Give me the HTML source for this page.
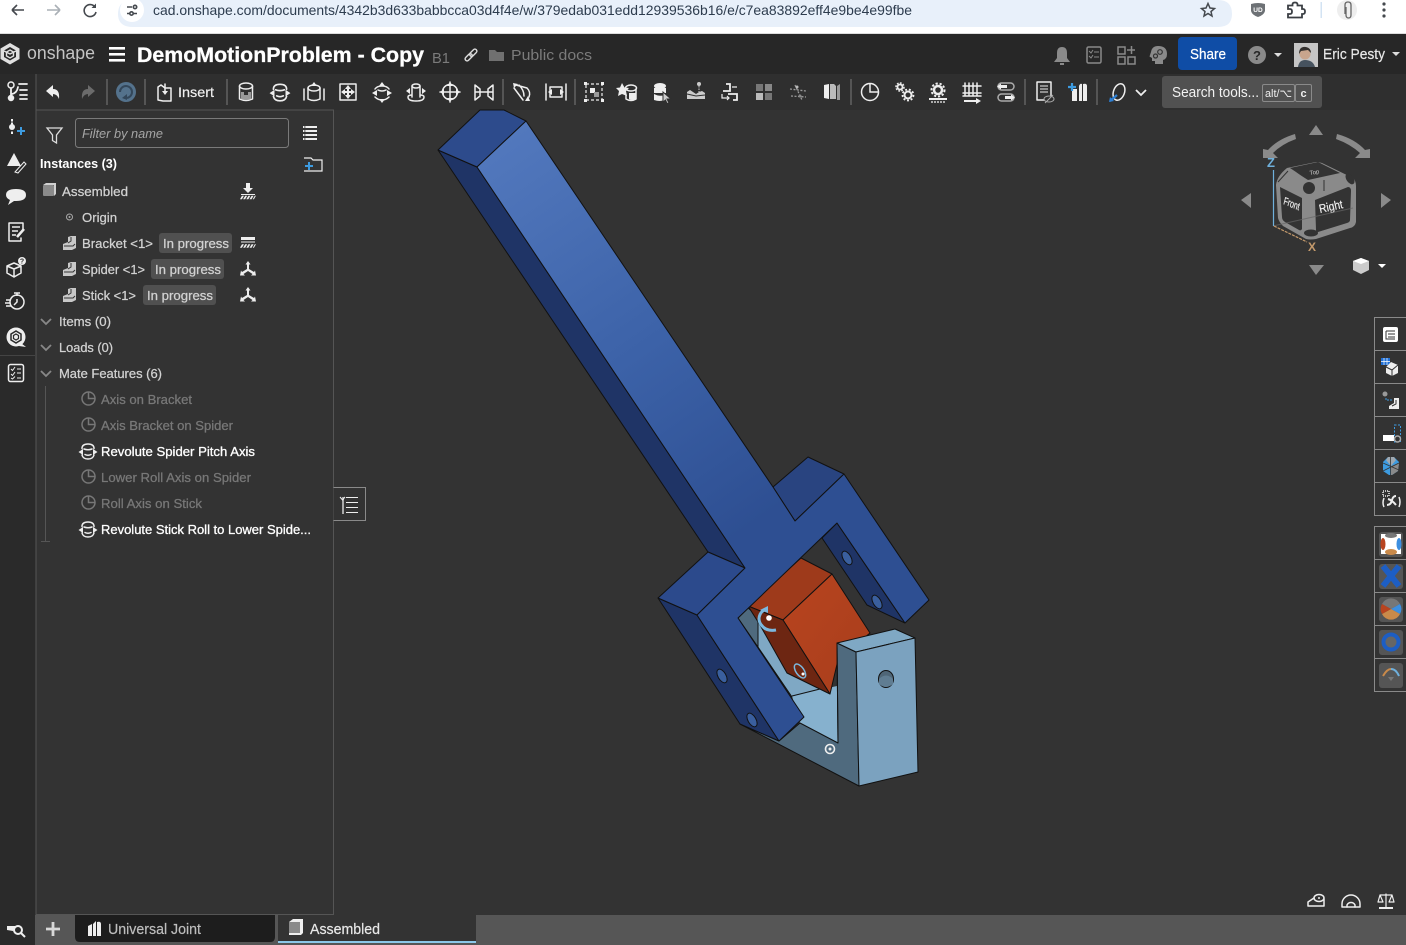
<!DOCTYPE html>
<html lang="en"><head><meta charset="utf-8"><title>DemoMotionProblem - Copy</title>
<style>
html,body{margin:0;padding:0;background:#333;width:1406px;height:945px;overflow:hidden}
svg{display:block;font-family:"Liberation Sans",sans-serif}
.i{fill:none;stroke:#eee;stroke-width:1.5;stroke-linecap:round;stroke-linejoin:round}
.f{fill:#eee;stroke:none}
.g{fill:#999;stroke:none}
.t{fill:#d2d2d2;font-size:13px;stroke:#d2d2d2;stroke-width:.25}
.w{fill:#fff;font-size:13px;font-weight:bold}
.m{fill:#787878;font-size:13px;stroke:#787878;stroke-width:.25}
.k{stroke:#111;stroke-width:1;stroke-linejoin:round}
.sep{stroke:#555;stroke-width:2}
</style></head><body>
<svg width="1406" height="945" viewBox="0 0 1406 945" xmlns="http://www.w3.org/2000/svg">
<defs>
<linearGradient id="st" gradientUnits="userSpaceOnUse" x1="500" y1="140" x2="760" y2="520"><stop offset="0" stop-color="#5278bd"/><stop offset=".55" stop-color="#3c62a8"/><stop offset="1" stop-color="#2e4f92"/></linearGradient>
<linearGradient id="or" x1="0" y1="0" x2="1" y2="1"><stop offset="0" stop-color="#b8441f"/><stop offset="1" stop-color="#a83e1c"/></linearGradient>
<g id="part"><path class="f" style="fill:#c8c8c8" d="M-7 1 L-2 -1 V-6 L1 -7 H6 V5 L2 7 H-7Z"/><path d="M-2 0 L1 -2 V-6" fill="none" stroke="#333" stroke-width="1"/><path d="M-6 3 H3 L5 1" fill="none" stroke="#333" stroke-width="1"/></g>
<g id="pie"><circle r="6.500" fill="none" stroke="#777" stroke-width="1.500"/><path d="M0 -6.500 V0 H6.500" fill="none" stroke="#777" stroke-width="1.500"/></g>
<g id="rev"><path class="i" d="M-6 -2.500 Q-6 -7 0 -7 Q6 -7 6 -2.500 M-4 -2 Q0 -.5 4 -2 M-6 4 Q-5 8 0 8 Q5 8 6 4 M-3 3.500 Q0 5 3 3.500"/><path class="f" d="M-9.500 1 L-5 -2 V4Z M9.500 1 L5 -2 V4Z"/></g>
<g id="tri"><path class="f" d="M0 -7 L2.500 -3.500 H1 V1 L6 4 L7 2.500 L8 7.500 L3 7.500 L4.500 6 L0 3 L-4.500 6 L-3 7.500 L-8 7.500 L-7 2.500 L-6 4 L-1 1 V-3.500 H-2.500Z"/></g>
</defs>

<!-- backgrounds -->
<rect width="1406" height="945" fill="#333"/>
<rect width="1406" height="34" fill="#fff"/>
<rect y="33" width="1406" height="1" fill="#ddd"/>
<rect y="34" width="1406" height="40" fill="#272727"/>
<rect x="36" y="74" width="1370" height="36" fill="#2f2f2f"/>
<rect x="0" y="74" width="36" height="841" fill="#2a2a2a"/>
<rect x="36" y="110" width="297.500" height="804.500" fill="#333" stroke="#555"/>
<rect x="35.500" y="74" width="1" height="841" fill="#555"/>
<rect y="915" width="1406" height="30" fill="#565656"/>
<rect y="915" width="35" height="30" fill="#2a2a2a"/>

<!-- browser bar -->
<path d="M133 0 H1218 Q1232 0 1232 14 Q1232 27 1218 27 H133 Q118 27 118 14 Q118 0 133 0Z" fill="#e8f0fa"/>
<circle cx="132" cy="10" r="12" fill="#fff"/>
<g fill="none" stroke="#45494e" stroke-width="1.600">
<path d="M12 10 H24 M12 10 L17 5 M12 10 L17 15"/>
<path d="M47 10 H60 M60 10 L55 5 M60 10 L55 15" stroke="#aab0b6"/>
<path d="M95 7 A6 6 0 1 0 96 12"/><path d="M96 3.500 V8 H91.500" fill="#45494e" stroke="none"/>
<path d="M127 7 H132 M127 13.500 H130 M137 13.500 H133"/><circle cx="135" cy="7" r="1.700"/><circle cx="131.500" cy="13.500" r="1.700"/>
</g>
<text x="153" y="15" font-size="14" fill="#2d3c4e" textLength="759" lengthAdjust="spacingAndGlyphs">cad.onshape.com/documents/4342b3d633babbcca03d4f4e/w/379edab031edd12939536b16/e/c7ea83892eff4e9be4e99fbe</text>
<path d="M1208 3.500 L1210 8 L1214.500 8.500 L1211 11.500 L1212 16 L1208 13.500 L1204 16 L1205 11.500 L1201.500 8.500 L1206 8Z" fill="none" stroke="#45494e" stroke-width="1.500"/>
<path d="M1251 4 Q1258 2 1265 4 V11 Q1264 15 1258 17 Q1252 15 1251 11Z" fill="#6d7175"/>
<text x="1258" y="12" font-size="6.500" fill="#fff" text-anchor="middle" font-weight="bold">UD</text>
<path d="M1288 5.500 H1292.500 V4.500 Q1292.500 2.500 1295 2.500 Q1297.500 2.500 1297.500 4.500 V5.500 H1302 V9 H1303 Q1305 9 1305 11.500 Q1305 14 1303 14 H1302 V17.500 H1288 V14 H1290 Q1292 14 1292 11.500 Q1292 9 1290 9 H1288Z" fill="none" stroke="#3b3f44" stroke-width="1.800"/>
<rect x="1320.500" y="2" width="1.500" height="16" fill="#d3e3f3"/>
<circle cx="1347" cy="10" r="10" fill="#eee"/>
<path d="M1345 14 V5 Q1345 2 1348 2 Q1351 2 1351 5 V15 Q1351 18 1348.500 18 Q1346 18 1346 15 V7" fill="none" stroke="#666" stroke-width="1.300"/>
<circle cx="1384" cy="4" r="1.600" fill="#45494e"/><circle cx="1384" cy="10" r="1.600" fill="#45494e"/><circle cx="1384" cy="16" r="1.600" fill="#45494e"/>

<!-- header -->
<path d="M10 43 L19.500 48.500 V59 L10 64.500 L.5 59 V48.500Z" fill="#e0e0e0"/>
<path d="M10 47 L16 50.500 V57 L10 60.500 L4 57 V50.500Z" fill="#272727"/>
<path d="M10 50 L13.500 52 V56 L10 58 L6.500 56 V52Z M4 51 L10 54 L16 51" fill="none" stroke="#e0e0e0" stroke-width="1.400"/>
<text x="27" y="59" font-size="18" fill="#c4c4c4" textLength="68" lengthAdjust="spacingAndGlyphs">onshape</text>
<rect x="109" y="47" width="16" height="2.600" fill="#fff"/><rect x="109" y="53" width="16" height="2.600" fill="#fff"/><rect x="109" y="59" width="16" height="2.600" fill="#fff"/>
<text x="137" y="62" font-size="21" font-weight="bold" fill="#fff" stroke="#fff" stroke-width=".3" textLength="287" lengthAdjust="spacingAndGlyphs">DemoMotionProblem - Copy</text>
<text x="432" y="63" font-size="15" fill="#7b7b7b" textLength="18" lengthAdjust="spacingAndGlyphs">B1</text>
<g transform="rotate(-45 471 55)" fill="none" stroke="#ddd" stroke-width="1.400"><rect x="463.500" y="53" width="8.500" height="4" rx="2"/><rect x="470" y="53" width="8.500" height="4" rx="2"/></g>
<path d="M489 50 H495 L497 52 H504 V61 H489Z" fill="#707070"/>
<text x="511" y="60" font-size="15" fill="#7b7b7b" textLength="81" lengthAdjust="spacingAndGlyphs">Public docs</text>
<path d="M1062 47 Q1067 47 1067 53 V58 L1070 62 H1054 L1057 58 V53 Q1057 47 1062 47Z M1060 63 H1064 V65 H1060Z" fill="#8a8a8a"/>
<rect x="1087" y="47" width="14" height="16" rx="1.500" fill="none" stroke="#8a8a8a" stroke-width="1.500"/>
<path d="M1089 51 L1091 53 L1093 50 M1094 52 H1099 M1089 56 L1091 58 L1093 55 M1094 57 H1099" fill="none" stroke="#8a8a8a"/>
<g fill="none" stroke="#8a8a8a" stroke-width="1.500"><rect x="1118" y="47" width="7" height="7"/><rect x="1118" y="57" width="7" height="7"/><rect x="1128" y="57" width="7" height="7"/><path d="M1131.500 46 V54 M1127 50 H1135"/></g>
<path d="M1158 46 Q1167 46 1167 54 Q1167 59 1163 60 V64 H1155 V61 H1152 V58 L1149.500 56.500 L1151 52 Q1152 46 1158 46Z" fill="#8a8a8a"/>
<circle cx="1160" cy="52" r="2.300" fill="none" stroke="#333" stroke-width="1.200"/><circle cx="1155.500" cy="56" r="2" fill="none" stroke="#333" stroke-width="1.200"/>
<rect x="1178" y="37" width="59" height="33" rx="4" fill="#0f4da6"/>
<text x="1190" y="59" font-size="14.500" fill="#fff" stroke="#fff" stroke-width=".2" textLength="36" lengthAdjust="spacingAndGlyphs">Share</text>
<circle cx="1257" cy="55" r="9" fill="#8a8a8a"/><text x="1257" y="60" font-size="13" font-weight="bold" text-anchor="middle" fill="#272727">?</text>
<path d="M1274 53 H1282 L1278 57Z M1392 52 H1400 L1396 56Z" fill="#ddd"/>
<rect x="1294" y="43" width="24" height="24" fill="#c5c5c5"/>
<path d="M1298 67 Q1299 60 1305 60 Q1313 60 1315 67Z" fill="#46525e"/><circle cx="1305" cy="54" r="5.500" fill="#c8a58d"/><path d="M1299 54 Q1299 46 1306 47 Q1311 48 1311 53 L1308 50 L1301 51Z" fill="#33302e"/>
<text x="1323" y="59" font-size="15" fill="#e8e8e8" stroke="#e8e8e8" stroke-width=".2" textLength="62" lengthAdjust="spacingAndGlyphs">Eric Pesty</text>

<!-- toolbar -->
<g class="sep"><path d="M107 79 V105 M145 79 V105 M227 79 V105 M503 79 V105 M575 79 V105 M851 79 V105 M1025 79 V105 M1097 79 V105"/></g>
<path class="f" d="M46 91 L53 85 V89 Q60 89 59 99 Q57 94 53 94 V97Z"/>
<path d="M95 91 L88 85 V89 Q81 89 82 99 Q84 94 88 94 V97Z" fill="#6b6b6b"/>
<circle cx="126" cy="92" r="10" fill="#54728c"/><path d="M120 92 A6 6 0 1 1 126 98" fill="none" stroke="#33475a" stroke-width="2"/><path d="M122 98 L127 94 V100Z" fill="#33475a"/>
<g class="i"><path d="M158 87 V100 L163 101 H171 V88 H165 L161 85Z"/><path d="M165 84 V92"/></g><path class="f" d="M162 91 H168 L165 95Z"/>
<text x="178" y="97" font-size="14" fill="#f0f0f0" stroke="#f0f0f0" stroke-width=".2" textLength="36" lengthAdjust="spacingAndGlyphs">Insert</text>

<g transform="translate(246,92)"><ellipse cy="-6" rx="6.500" ry="3" class="i"/><path class="i" d="M-6.500 -6 V7 Q0 10 6.500 7 V-6"/><path class="g" d="M-5 0 H-2 V3 H2 V0 H5 V7 Q0 9 -5 7Z"/></g>
<use href="#rev" transform="translate(280,92) scale(1.100)"/>
<g transform="translate(314,92)"><ellipse cy="-4" rx="6" ry="3" class="i"/><path class="i" d="M-6 -4 V7 Q0 10 6 7 V-4 M-10 -3 V8 M10 -3 V8"/><path class="f" d="M0 -10 L3 -6 H-3Z"/></g>
<g transform="translate(348,92)"><rect x="-8" y="-8" width="16" height="16" class="i"/><path class="f" d="M0 -7 L3 -3 H1 V-1 H3 V-3 L7 0 L3 3 V1 H1 V3 H3 L0 7 L-3 3 H-1 V1 H-3 V3 L-7 0 L-3 -3 V-1 H-1 V-3 H-3Z"/></g>
<g transform="translate(382,92)"><path class="i" d="M-7 -3 Q-5 -6 0 -6 Q5 -6 7 -3 M-4 -2 Q0 0 4 -2 M-7 5 Q-4 8 0 8 Q4 8 7 5"/><path class="f" d="M0 -10 L3 -6 H-3Z M-10 1 L-5 -2 V4Z M10 1 L5 -2 V4Z M-3 7 H3 L0 11Z"/></g>
<g transform="translate(416,92)"><ellipse cy="-6" rx="4" ry="2" class="i"/><path class="i" d="M-4 -6 V5 M4 -6 V5 M-8 5 Q-8 9 0 9 Q8 9 8 5 Q8 3 4 3 M-4 3 Q-8 3 -8 5"/><path class="f" d="M-10 -1 L-6 -4 V2Z M10 -1 L6 -4 V2Z"/></g>
<g transform="translate(450,92)"><circle r="7.500" class="i"/><path class="i" d="M-10 0 H10 M0 -10 V10"/><path class="f" d="M0 -10 L3 -6 H-3Z M0 10 L3 6 H-3Z M-10 0 L-6 -3 V3Z M10 0 L6 -3 V3Z"/></g>
<g transform="translate(484,92)"><path class="i" d="M-9 -7 V8 L-4 4 V-3Z M9 -7 V8 L4 4 V-3Z M-8 0 H8"/></g>
<g transform="translate(522,92)"><path class="i" d="M-6 -7 L5 -4 Q9 0 7 5 M-8 -4 L1 8 M-3 -7 Q2 -2 2 4"/><path class="f" d="M-9 -9 L-4 -8 L-8 -4Z M3 9 L8 9 L6 4Z"/></g>
<g transform="translate(556,92)"><path class="i" d="M-10 -8 V8 M10 -8 V8 M-6 -5 H6 V5 H-6Z"/><path class="f" d="M-8 0 L-4 -3 V3Z M8 0 L4 -3 V3Z"/></g>
<g transform="translate(594,92)"><rect x="-8" y="-8" width="16" height="16" fill="none" stroke="#eee" stroke-width="1.200" stroke-dasharray="3 2"/><rect x="-4" y="-4" width="5" height="5" class="f"/><rect x="0" y="0" width="5" height="5" class="g"/><rect x="-10" y="-10" width="3" height="3" class="f"/><rect x="7" y="-10" width="3" height="3" class="f"/><rect x="-10" y="7" width="3" height="3" class="f"/><rect x="7" y="7" width="3" height="3" class="f"/></g>
<g transform="translate(628,92)"><path class="f" d="M-6 -9 L-3.500 -4.500 L1 -4 L-2 -1 L-1 4 L-6 2 L-10 4 L-9 -1 L-12 -4 L-8 -4.500Z"/><ellipse cx="3" cy="-4" rx="5.500" ry="3" class="i"/><path class="i" d="M8 -3 V7 Q3 10 -2 7 V3"/><path class="f" d="M1 1 H8 V7 Q3 9 1 7Z"/></g>
<g transform="translate(662,92)"><ellipse cx="-2" cy="-6" rx="6" ry="3" class="f"/><path class="f" d="M-8 -4 H4 V1 H-8Z"/><path class="f" d="M-8 2 Q-2 5 2 3 V8 Q-2 10 -8 8Z"/><path d="M1 0 L9 7 L5 7 L7 11 L5 11.500 L3.500 8 L1 10Z" fill="#ccc" stroke="#2f2f2f"/></g>
<g transform="translate(696,92)"><circle cx="3" cy="-8" r="2" fill="#ccc"/><path d="M3 -6 V0" stroke="#ccc" stroke-dasharray="1.500 1"/><path d="M-9 0 L-6 -2 L-3 0 L0 2 L3 0 L6 -1 L9 1 V7 H-9Z" fill="#ccc"/><path d="M-9 2 L0 4 L9 3" stroke="#2f2f2f" fill="none"/></g>
<g transform="translate(730,92)"><path d="M-4 -8 H0 V-1 H-7" fill="none" stroke="#eee" stroke-width="1.800"/><path d="M4 9 H8 V3 H-1" fill="none" stroke="#eee" stroke-width="1.800" transform="translate(-1,-1)"/><path d="M-8 2 V6 H-1 M-3 4 L-1 6 L-3 8 M7 -5 H2" fill="none" stroke="#eee" stroke-width="1.200"/></g>
<g transform="translate(764,92)"><rect x="-8" y="-8" width="7" height="7" class="g" style="fill:#777"/><rect x="1" y="-8" width="7" height="7" class="g" style="fill:#888"/><rect x="-8" y="1" width="7" height="7" class="g" style="fill:#bbb"/><rect x="1" y="1" width="7" height="7" class="g" style="fill:#777"/></g>
<g transform="translate(798,92)" stroke="#9a9a9a" stroke-dasharray="2 1.500" fill="none" stroke-width="1.300"><path d="M-8 -3 L8 -1 M-7 4 L8 5 M-3 -7 L4 8"/><circle cx="-1" cy="-5" r="1.500" fill="#bbb" stroke="none"/><circle cx="2" cy="4" r="1.500" fill="#888" stroke="none"/></g>
<g transform="translate(832,92)"><path class="f" d="M-8 -7 L-3 -8 V7 L-8 6Z"/><path d="M-2 -8 H2 L4 -6 V7 H-2Z" fill="#bbb"/><path class="g" d="M5 -6 L8 -8 V8 H5Z"/></g>
<circle cx="870" cy="92" r="8.500" fill="none" stroke="#eee" stroke-width="1.500"/><path d="M870 83.500 V92 H878.500" fill="none" stroke="#eee" stroke-width="1.500"/>
<g transform="translate(904,92)"><circle cx="-4" cy="-5" r="2.500" fill="none" stroke="#eee" stroke-width="1.800"/><circle cx="-4" cy="-5" r="4" fill="none" stroke="#eee" stroke-width="1.500" stroke-dasharray="1.800 1.300"/><circle cx="4" cy="3" r="3.500" fill="none" stroke="#eee" stroke-width="2"/><circle cx="4" cy="3" r="5.500" fill="none" stroke="#eee" stroke-width="1.800" stroke-dasharray="2 1.800"/></g>
<g transform="translate(938,92)"><circle cy="-2" r="4" fill="none" stroke="#eee" stroke-width="2.500"/><circle cy="-2" r="6.500" fill="none" stroke="#eee" stroke-width="2" stroke-dasharray="2.200 1.800"/><path class="f" d="M-9 6 H9 V8 H-9Z"/><path d="M-7 10 H7" stroke="#aaa" stroke-dasharray="2 1" stroke-width="2"/></g>
<g transform="translate(972,92)"><path class="i" d="M-9 -6 H9 M-9 1 H9 M-7 -9 V4 M-3 -9 V4 M1 -9 V4 M5 -9 V4 M-9 4 L9 4"/><path class="f" d="M-8 8 H4 V6 L9 9 L4 12 V10 H-8Z"/></g>
<g transform="translate(1006,92)"><rect x="-8" y="-9" width="16" height="7" rx="3.500" class="i" style="stroke:#aaa"/><rect x="-8" y="2" width="16" height="7" rx="3.500" class="i" style="stroke:#aaa"/><path class="f" d="M-9 -5.500 L-5 -8.500 V-7 H1 V-4 H-5 V-2.500Z M9 5.500 L5 2.500 V4 H-1 V7 H5 V8.500Z"/></g>
<g transform="translate(1044,92)"><path class="i" d="M-7 -10 H7 V4 M-7 -10 V8 H0"/><path d="M-4 -6 H4 M-4 -3 H4 M-4 0 H4" stroke="#eee"/><ellipse cx="5" cy="7" rx="5" ry="3" fill="none" stroke="#aaa"/><path d="M1 11 L9 3" stroke="#aaa"/></g>
<g transform="translate(1078,92)"><path class="f" d="M-6 -3 H-1 V9 H-6Z"/><path class="f" d="M1 -6 Q2 -9 4 -8 L4 9 H1Z M5 -8 Q9 -9 9 -6 V9 H5Z"/><path d="M-10 -5 H-2 M-6 -9 V-1" stroke="#3d9be0" stroke-width="2.200"/></g>
<g transform="translate(1117,92)"><ellipse cx="2" rx="5.500" ry="8.500" transform="rotate(20 2 0)" class="i"/><path d="M0 3 L-7 9" stroke="#2d7fd3" stroke-width="2.200"/><path d="M-8 10 L-7 5 L-3 9Z" fill="#2d7fd3"/></g>
<path d="M1136 90 L1141 95 L1146 90" fill="none" stroke="#eee" stroke-width="1.800"/>
<rect x="1162" y="76" width="160" height="32" rx="3" fill="#515151"/>
<text x="1172" y="97" font-size="14.500" fill="#f2f2f2" textLength="87" lengthAdjust="spacingAndGlyphs">Search tools...</text>
<rect x="1262.500" y="84.500" width="32" height="17" rx="1.500" fill="none" stroke="#8a8a8a"/><rect x="1295.500" y="84.500" width="16" height="17" rx="1.500" fill="none" stroke="#8a8a8a"/>
<text x="1265" y="97" font-size="11" fill="#eee" textLength="27" lengthAdjust="spacingAndGlyphs">alt/⌥</text>
<text x="1300.500" y="97" font-size="11" fill="#eee" font-weight="bold">c</text>

<!-- left strip -->
<g class="i" transform="translate(17,91)"><circle cx="-6" cy="-6" r="3"/><circle cx="-6" cy="7" r="2.500" fill="#eee"/><path d="M-6 -3 V5 M-5 3 Q0 2 1 -4 M2 -7 H10 M3 -1 H10 M3 4 H10 M3 8 H10" stroke-width="1.800"/></g>
<g transform="translate(16,128)"><circle cx="-4" cy="-1" r="3" class="f"/><rect x="-5" y="-9" width="2" height="2.500" class="f"/><rect x="-5" y="-5.500" width="2" height="2" class="f"/><rect x="-5" y="3.500" width="2" height="2.500" class="f"/><path d="M5 -1 V7 M1 3 H9" stroke="#3d9be0" stroke-width="2"/></g>
<g transform="translate(16,162)"><path class="f" d="M-9 4 L-2 -9 L5 4Z"/><path d="M-1 10 L8 0 L10 2 L2 11Z" fill="#2a2a2a" stroke="#eee" stroke-width="1"/></g>
<path class="f" d="M16 189 Q26 189 26 195 Q26 201 16 201 L14 201 L8 205 L10 200 Q6 198 6 195 Q6 189 16 189Z"/>
<g transform="translate(16,232)"><path class="i" d="M-7 -9 H7 V-2 M-7 -9 V9 H5 V6" stroke-width="2"/><path d="M-4 -5 H4 M-4 -1 H2 M-4 3 H0" stroke="#eee" stroke-width="1.500"/><path d="M1 5 L8 -3" stroke="#eee" stroke-width="2.500"/></g>
<g transform="translate(15,268)"><path class="i" d="M-8 -2 L-1 -5 L6 -2 V5 L-1 9 L-8 5Z M-8 -2 L-1 1 L6 -2 M-1 1 V9"/><circle cx="7" cy="-7" r="4" class="f"/><text x="7" y="-4.500" font-size="7" font-weight="bold" text-anchor="middle" fill="#2a2a2a">?</text></g>
<g transform="translate(16,302)"><circle cx="1" cy="0" r="7" class="i" stroke-width="1.800"/><path d="M-2 -9 H4 M1 -9 V-6 M-10 -2 H-5 M-11 1 H-6 M-10 4 H-5 M1 -3 V0 L-2 3" stroke="#eee" stroke-width="1.500" fill="none"/></g>
<g transform="translate(16,337)"><circle r="9.500" class="f"/><path d="M0 -6 L5 -3 V3 L0 6 L-5 3 V-3Z" fill="none" stroke="#2a2a2a" stroke-width="1.500"/><path d="M0 -3 L2.500 -1.500 V1.500 L0 3 L-2.500 1.500 V-1.500Z" fill="none" stroke="#2a2a2a" stroke-width="1.200"/><path class="f" d="M5 6 L10 10 L3 9Z"/></g>
<rect x="0" y="355" width="35" height="1" fill="#444"/>
<g transform="translate(16,373)"><rect x="-7.500" y="-8.500" width="15" height="17" rx="2" class="i" stroke-width="1.800"/><path d="M-5 -4 L-3.500 -2.500 L-1 -6 M1 -4 H5 M-5 1 L-3.500 2.500 L-1 -1 M1 0 H5 M-5 5 L-3.500 6 L-1 3.500 M1 5 H5" fill="none" stroke="#eee"/></g>

<!-- panel -->
<path d="M47 128 H62 L56.500 135 V143 L52.500 140.500 V135Z" fill="none" stroke="#ddd" stroke-width="1.300"/>
<rect x="75.500" y="118.500" width="213" height="29" rx="3" fill="#333" stroke="#7a7a7a"/>
<text x="82" y="138" font-size="13" font-style="italic" fill="#a6a6a6" textLength="81" lengthAdjust="spacingAndGlyphs">Filter by name</text>
<path d="M303 127 H317 M303 131 H317 M303 135 H317 M303 139 H317" stroke="#eee" stroke-width="2" stroke-dasharray="1.500 .8 12"/>
<text x="40" y="168" class="w" textLength="77" lengthAdjust="spacingAndGlyphs">Instances (3)</text>
<path d="M304 158 H311 L313 160 H322 V171 H304" fill="none" stroke="#eee" stroke-width="1.200"/>
<path d="M309 162 V170 M305 166 H313" stroke="#3d9be0" stroke-width="2"/>
<g transform="translate(49,191)"><rect x="-6" y="-6" width="11" height="11" rx="1" fill="#8a8a8a"/><path d="M-6 -6 L-3 -8 H7 V3 L5 5 V-6Z" fill="#d0d0d0"/></g>
<text x="62" y="196" class="t" textLength="66" lengthAdjust="spacingAndGlyphs">Assembled</text>
<g transform="translate(248,191)"><path class="f" d="M-2 -8 H2 V-3 H5 L0 2 L-5 -3 H-2Z M-7 3 H7 V4 H-7Z"/><path d="M-7 6.500 H7" stroke="#eee" stroke-width="3.500" stroke-dasharray="2 1.200" transform="skewX(-30) translate(3.700,0)"/></g>
<circle cx="69.500" cy="217" r="3" fill="none" stroke="#aaa"/><circle cx="69.500" cy="217" r="1" fill="#aaa"/>
<text x="82" y="222" class="t" textLength="35" lengthAdjust="spacingAndGlyphs">Origin</text>
<use href="#part" transform="translate(70,243)"/>
<text x="82" y="248" class="t" textLength="71" lengthAdjust="spacingAndGlyphs">Bracket &lt;1&gt;</text>
<rect x="159" y="233" width="73" height="20" rx="3" fill="#505050"/>
<text x="163" y="248" class="t" textLength="66" lengthAdjust="spacingAndGlyphs">In progress</text>
<g transform="translate(248,243)"><path class="f" d="M-7 -6 H7 V-3 H-7Z"/><path d="M-7 -1 H7" stroke="#eee"/><path d="M-7 3 H7" stroke="#eee" stroke-width="3.500" stroke-dasharray="2 1.200" transform="skewX(-30) translate(1.700,0)"/></g>
<use href="#part" transform="translate(70,269)"/>
<text x="82" y="274" class="t" textLength="63" lengthAdjust="spacingAndGlyphs">Spider &lt;1&gt;</text>
<rect x="151" y="259" width="73" height="20" rx="3" fill="#505050"/>
<text x="155" y="274" class="t" textLength="66" lengthAdjust="spacingAndGlyphs">In progress</text>
<use href="#tri" transform="translate(248,268)"/>
<use href="#part" transform="translate(70,295)"/>
<text x="82" y="300" class="t" textLength="54" lengthAdjust="spacingAndGlyphs">Stick &lt;1&gt;</text>
<rect x="143" y="285" width="73" height="20" rx="3" fill="#505050"/>
<text x="147" y="300" class="t" textLength="66" lengthAdjust="spacingAndGlyphs">In progress</text>
<use href="#tri" transform="translate(248,294)"/>
<path d="M41 319 L46 324 L51 319 M41 345 L46 350 L51 345 M41 371 L46 376 L51 371" fill="none" stroke="#888" stroke-width="1.800"/>
<text x="59" y="326" class="t" textLength="52" lengthAdjust="spacingAndGlyphs">Items (0)</text>
<text x="59" y="352" class="t" textLength="54" lengthAdjust="spacingAndGlyphs">Loads (0)</text>
<text x="59" y="378" class="t" textLength="103" lengthAdjust="spacingAndGlyphs">Mate Features (6)</text>
<path d="M45.500 386 V541 M41 541.500 H50" stroke="#555" fill="none"/>
<use href="#pie" transform="translate(88.500,398.500)"/>
<text x="101" y="404" class="m" textLength="91" lengthAdjust="spacingAndGlyphs">Axis on Bracket</text>
<use href="#pie" transform="translate(88.500,424.500)"/>
<text x="101" y="430" class="m" textLength="132" lengthAdjust="spacingAndGlyphs">Axis Bracket on Spider</text>
<use href="#rev" transform="translate(88,451)"/>
<text x="101" y="456" class="w" style="font-weight:normal" stroke="#fff" stroke-width=".3" textLength="154" lengthAdjust="spacingAndGlyphs">Revolute Spider Pitch Axis</text>
<use href="#pie" transform="translate(88.500,476.500)"/>
<text x="101" y="482" class="m" textLength="150" lengthAdjust="spacingAndGlyphs">Lower Roll Axis on Spider</text>
<use href="#pie" transform="translate(88.500,502.500)"/>
<text x="101" y="508" class="m" textLength="101" lengthAdjust="spacingAndGlyphs">Roll Axis on Stick</text>
<use href="#rev" transform="translate(88,529)"/>
<text x="101" y="534" class="w" style="font-weight:normal" stroke="#fff" stroke-width=".3" textLength="210" lengthAdjust="spacingAndGlyphs">Revolute Stick Roll to Lower Spide...</text>

<!-- side tab -->
<path d="M333.500 487.500 H365.500 V520.500 H333.500" fill="#333" stroke="#8a8a8a"/>
<path d="M343 497 V514" stroke="#aaa" stroke-width="2"/><path d="M340 497 L342.500 500 L345 497 M346 497.500 H358 M346 502.500 H358 M346 507.500 H358 M346 512.500 H358" fill="none" stroke="#eee"/>

<!-- model -->
<g class="k">
<polygon points="738,618 748,608 760,618 760,650" fill="#4f6a7e"/>
<polygon points="758,617 783,620 790,672 830,694 792,697 775,672 758,647" fill="#7fa8c4"/>
<polygon points="792,696 837,686 838,743 800,723" fill="#86b1ce" stroke="none"/>
<path d="M792 696 L832 686" stroke="#111" fill="none"/>
<polygon points="748,606 801,558 832,574 783,620" fill="#9e3a1b"/>
<polygon points="832,574 870,633 838,660 830,694 783,620" fill="url(#or)"/>
<polygon points="748,606 783,620 830,694 787,673 760,625" fill="#6d2612"/>
<polygon points="740,724 779,741 800,723 838,743 837,643 856,652 859,786" fill="#4f6a7e"/>
<polygon points="837,643 895,629 915,638 856,652" fill="#7fa8c4"/>
<polygon points="856,652 915,638 918,772 859,786" fill="#7ba2bf"/>
<path d="M837 643 L838 743" fill="none"/>
<ellipse cx="886" cy="679" rx="7.500" ry="8.500" fill="#4f6677"/>
<path d="M879 679 Q886 672 893 679 L893 684 Q886 690 879 684Z" fill="#607d92" stroke="none"/>
<polygon points="438,150 477,167 745,568 708,552" fill="#1f3466"/>
<polygon points="658,598 697,615 779,741 740,724" fill="#1f3466"/>
<polygon points="837,523 905,623 867,605 822,538" fill="#1f3466"/>
<polygon points="438,150 480,110 504,110 526,121 477,167" fill="#2d4b8c"/>
<polygon points="773,487 808,457 844,474 795,521" fill="#294480"/>
<polygon points="658,598 708,552 745,568 697,615" fill="#2c4a8c"/>
<polygon points="526,121 773,487 795,521 844,474 929,600 905,623 837,523 738,618 804,717 779,741 697,615 745,568 477,167" fill="url(#st)"/>
<ellipse cx="847" cy="558" rx="4" ry="7.500" transform="rotate(-30 847 558)" fill="#3a5f9e"/>
<ellipse cx="877" cy="602" rx="4" ry="7.500" transform="rotate(-30 877 602)" fill="#3a5f9e"/>
<ellipse cx="722" cy="676" rx="4" ry="7.500" transform="rotate(-30 722 676)" fill="#3a5f9e"/>
<ellipse cx="752" cy="720" rx="4" ry="7.500" transform="rotate(-30 752 720)" fill="#3a5f9e"/>
</g>
<path d="M767 609 A10 10 0 0 0 760 623 Q765 632 776 630" fill="none" stroke="#7cb8de" stroke-width="3"/>
<path d="M760 610 L768 606 L768 613Z" fill="#7cb8de"/>
<circle cx="769" cy="618" r="2.800" fill="#fff"/>
<ellipse cx="800" cy="671" rx="4" ry="8" transform="rotate(-35 800 671)" fill="none" stroke="#7cb8de" stroke-width="1.500"/>
<circle cx="803" cy="674" r="1.500" fill="#fff"/>
<circle cx="830" cy="749" r="4.500" fill="none" stroke="#eee" stroke-width="1.600"/><circle cx="830" cy="749" r="1.500" fill="#eee"/>

<!-- nav cube -->
<g fill="#8a8a8a">
<path d="M1316 125 L1323 135 H1309Z M1241 200 L1251 193 V208Z M1391 200 L1381 193 V208Z M1309 265 H1324 L1316 275Z"/>
<path d="M1263 158 L1263 149 L1268 150 Q1278 139 1295 134 L1296 139 Q1282 144 1273 153 L1278 158Z"/>
<path d="M1370 158 L1370 149 L1365 150 Q1355 139 1337 134 L1336 139 Q1350 144 1360 153 L1355 158Z"/>
</g>
<path d="M1287 168 L1316 162 Q1319 162 1322 163 L1353 178 Q1356 181 1356 186 L1356 222 Q1355 227 1350 228 L1316 239 Q1310 240 1306 239 L1283 226 Q1279 222 1278 218 L1276 185 Q1277 176 1287 168Z" fill="#8a8a8a"/>
<path d="M1280 187 L1302 198 L1302 229 Q1301 231 1299 230 L1285 222 Q1282 220 1282 217Z" fill="#333"/>
<path d="M1315 200 L1348 187 Q1351 187 1351 191 L1350 220 Q1350 222 1347 223 L1318 232 Q1316 232 1316 230Z" fill="#333"/>
<path d="M1290 168 L1318 162 L1340 173 L1308 180Q1300 175 1296 172Z" fill="#333"/>
<circle cx="1309" cy="188" r="6" fill="#333"/>
<ellipse cx="1311" cy="233" rx="7" ry="3.500" fill="#333"/>
<ellipse cx="1350" cy="179" rx="3.500" ry="6" transform="rotate(-35 1350 179)" fill="#333"/>
<path d="M1288 171 L1278 182" stroke="#333" stroke-width="1"/>
<path d="M1324 191 L1324 180" stroke="#333"/>
<text font-size="10.500" fill="#eee" stroke="#eee" stroke-width=".2" transform="translate(1283,204) rotate(22) skewX(8)" textLength="17" lengthAdjust="spacingAndGlyphs">Front</text>
<text font-size="12" fill="#eee" stroke="#eee" stroke-width=".2" transform="translate(1320,213) rotate(-12)" textLength="24" lengthAdjust="spacingAndGlyphs">Right</text>
<text font-size="6" fill="#ccc" transform="translate(1310,175) rotate(-10)">Top</text>
<path d="M1273 226 L1353 208" stroke="#666" opacity=".7"/>
<path d="M1273.500 170 V226" stroke="#6fb0dc" stroke-width="1.200"/>
<path d="M1274 226 L1307 242" stroke="#c49a6c" stroke-width="1.200" stroke-dasharray="3 1"/>
<text x="1267" y="167" font-size="13" font-weight="bold" fill="#6fb0dc">Z</text>
<text x="1308" y="251" font-size="12" font-weight="bold" fill="#c49a6c">X</text>
<path d="M1353 261 L1361 258 L1369 261 V270 L1361 274 L1353 270Z" fill="#ccc"/><path d="M1353 261 L1361 264 L1369 261 L1361 258Z" fill="#fff"/>
<path d="M1378 264 H1386 L1382 268Z" fill="#fff"/>

<!-- right side toolbar -->
<g fill="none" stroke="#8a8a8a">
<path d="M1406 317.500 H1374.500 V515.500 H1406 M1375 350.500 H1406 M1375 383.500 H1406 M1375 416.500 H1406 M1375 449.500 H1406 M1375 482.500 H1406"/>
<path d="M1406 526.500 H1374.500 V691.500 H1406 M1375 559.500 H1406 M1375 592.500 H1406 M1375 625.500 H1406 M1375 658.500 H1406"/>
</g>
<g transform="translate(1391,335)"><rect x="-8" y="-8" width="15" height="15" rx="2" fill="#fff"/><path d="M-5 -4 H4 M-3 -1 H4 M-3 2 H4 M-5 -4 V4 H4" fill="none" stroke="#333"/></g>
<g transform="translate(1391,367)"><rect x="-10" y="-9" width="9" height="7" fill="#1f6fd6"/><path d="M-7 -9 V-2 M-4 -9 V-2 M-10 -5.500 H-1" stroke="#fff" stroke-width=".7"/><path d="M0 -5 L7 -2 V6 L1 9 L-5 6 V0 Z" fill="#eee"/><path d="M-5 0 L1 3 L7 -2 M1 3 V9" fill="none" stroke="#333"/></g>
<g transform="translate(1391,400)"><circle cx="-6" cy="-6" r="2.500" fill="#999"/><path d="M-5 -2 V0 H1" fill="none" stroke="#3d9be0" stroke-dasharray="2 1"/><path d="M-2 6 L3 3 V-2 H8 V9 H-2Z" fill="#eee"/><path d="M1 6 L5 4 V0" stroke="#333" fill="none"/></g>
<g transform="translate(1391,433)"><rect x="-8" y="2" width="11" height="6" fill="#fff"/><rect x="3.500" y="-8" width="6" height="17" fill="none" stroke="#3d9be0" stroke-dasharray="2 1.500"/><circle cx="6.500" cy="6" r="3" fill="#333" stroke="#aaa" stroke-width="1.500"/></g>
<g transform="translate(1391,466)"><path d="M-3 -9 H3 L8 -4 L7 5 L1 9 H-2 L-8 5 L-8 -4Z" fill="#3d9be0"/><path d="M0 0 L8 -3 L7 5 L1 9 H0Z" fill="#8a8a8a"/><path d="M-3 -9 H3 L5 -6 L0 0 L-5 -6Z" fill="#9fa8b0"/><path d="M-8 -3 L8 4 M8 -3 L-8 5 M-.5 -9 V9" stroke="#333" stroke-width=".8"/></g>
<g transform="translate(1391,499)"><rect x="-8" y="-8" width="6" height="5" fill="none" stroke="#eee" stroke-dasharray="1 1" stroke-width="1.500"/><path d="M-7 -1 Q-9 4 -7 8 M8 -2 Q10 3 8 8" fill="none" stroke="#eee" stroke-width="1.500"/><path d="M-4 6 Q0 6 1 1 Q2 -3 5 -3 M-3 0 Q1 1 5 6" fill="none" stroke="#eee" stroke-width="2"/></g>
<g><rect x="1379" y="532" width="24" height="25" rx="3" fill="#555"/><rect x="1381" y="534" width="20" height="20" fill="#fff"/>
<ellipse cx="1391" cy="535.500" rx="6" ry="2.500" fill="#777"/><ellipse cx="1391" cy="552" rx="6" ry="3" fill="#c98a4a"/><ellipse cx="1383" cy="544" rx="2.500" ry="6" fill="#b8441f"/><ellipse cx="1399" cy="544" rx="2.500" ry="6" fill="#3d8fe0"/></g>
<g transform="translate(1391,576)"><rect x="-12" y="-12" width="24" height="25" rx="3" fill="#555"/><path d="M-8 -10 L8 10 M8 -10 L-8 10" stroke="#1d5ec4" stroke-width="6"/></g>
<g transform="translate(1391,609)"><rect x="-12" y="-12" width="24" height="25" rx="3" fill="#555"/><path d="M0 0 L-9 -5 A10 10 0 0 1 9 -5Z" fill="#777"/><path d="M0 0 L9 -5 A10 10 0 0 1 9 5Z" fill="#3d8fe0"/><path d="M0 0 L9 5 A10 10 0 0 1 -9 5Z" fill="#c98a4a"/><path d="M0 0 L-9 5 A10 10 0 0 1 -9 -5Z" fill="#b8441f"/></g>
<g transform="translate(1391,642)"><rect x="-12" y="-12" width="24" height="25" rx="3" fill="#555"/><circle r="7.500" fill="#666" stroke="#1d5ec4" stroke-width="4"/></g>
<g transform="translate(1391,675)"><rect x="-12" y="-12" width="24" height="25" rx="3" fill="#555"/><path d="M-8 1 Q-4 -6 0 -6" fill="none" stroke="#c98a4a" stroke-width="2"/><path d="M0 -6 Q5 -6 8 1" fill="none" stroke="#6fb0dc" stroke-width="2"/><path d="M-3 2 H3 L0 6Z" fill="#777"/></g>

<!-- bottom-right icons -->
<g transform="translate(1316,901)"><ellipse cx="3" cy="-3" rx="5" ry="3.500" class="i"/><path class="i" d="M-8 5 V1 L-2 -3 M8 -2 V5 H-8"/><circle cx="3" cy="-3" r="1" class="f"/></g>
<g transform="translate(1351,901)"><path class="i" d="M-9 6 V3 A9 9 0 0 1 9 3 V6Z"/><path class="i" d="M-4 6 V4 A4.500 4.500 0 0 1 4 4 V6"/></g>
<g transform="translate(1386,901)"><path class="f" d="M-7 6 H7 V8 H-7Z"/><path class="i" d="M0 -7 V6 M-6 -6 H6 M-6 -6 L-8 1 H-3Z M6 -6 L8 1 H3Z" style="stroke-width:1.200"/></g>

<!-- bottom bar -->
<g transform="translate(16,931)"><path class="f" d="M-9 -5 H1 L-3 0 L-9 -1Z"/><circle cx="2" cy="-1" r="4" fill="none" stroke="#eee" stroke-width="2"/><path d="M5 2 L9 6" stroke="#eee" stroke-width="2"/></g>
<path d="M46 929 H60 M53 922 V936" stroke="#d8d8d8" stroke-width="2.800"/>
<path d="M75 915 H275 V937 Q275 942 270 942 H80 Q75 942 75 937Z" fill="#1d1d1d"/>
<g transform="translate(95,929)"><path class="f" d="M-7 -3 L-3 -5 V7 H-7Z M-2 -5 L1 -8 V7 H-2Z M2 -7 Q6 -8 6 -5 V7 H2Z"/></g>
<text x="108" y="934" font-size="14.500" fill="#bdbdbd" stroke="#bdbdbd" stroke-width=".2" textLength="93" lengthAdjust="spacingAndGlyphs">Universal Joint</text>
<path d="M278 915 H476 V941 Q476 942 474 942 H280 Q278 942 278 941Z" fill="#333"/>
<rect x="278" y="941" width="198" height="2" fill="#8cc8ea"/>
<g transform="translate(296,928)"><rect x="-7" y="-6" width="12" height="12" fill="#8a8a8a"/><path d="M-7 -6 L-3 -9 H7 V5 L5 7 H-7 V5 H4 V-6Z" fill="#eee"/></g>
<text x="310" y="934" font-size="14.500" fill="#e8e8e8" stroke="#e8e8e8" stroke-width=".2" textLength="70" lengthAdjust="spacingAndGlyphs">Assembled</text>
</svg>
</body></html>
